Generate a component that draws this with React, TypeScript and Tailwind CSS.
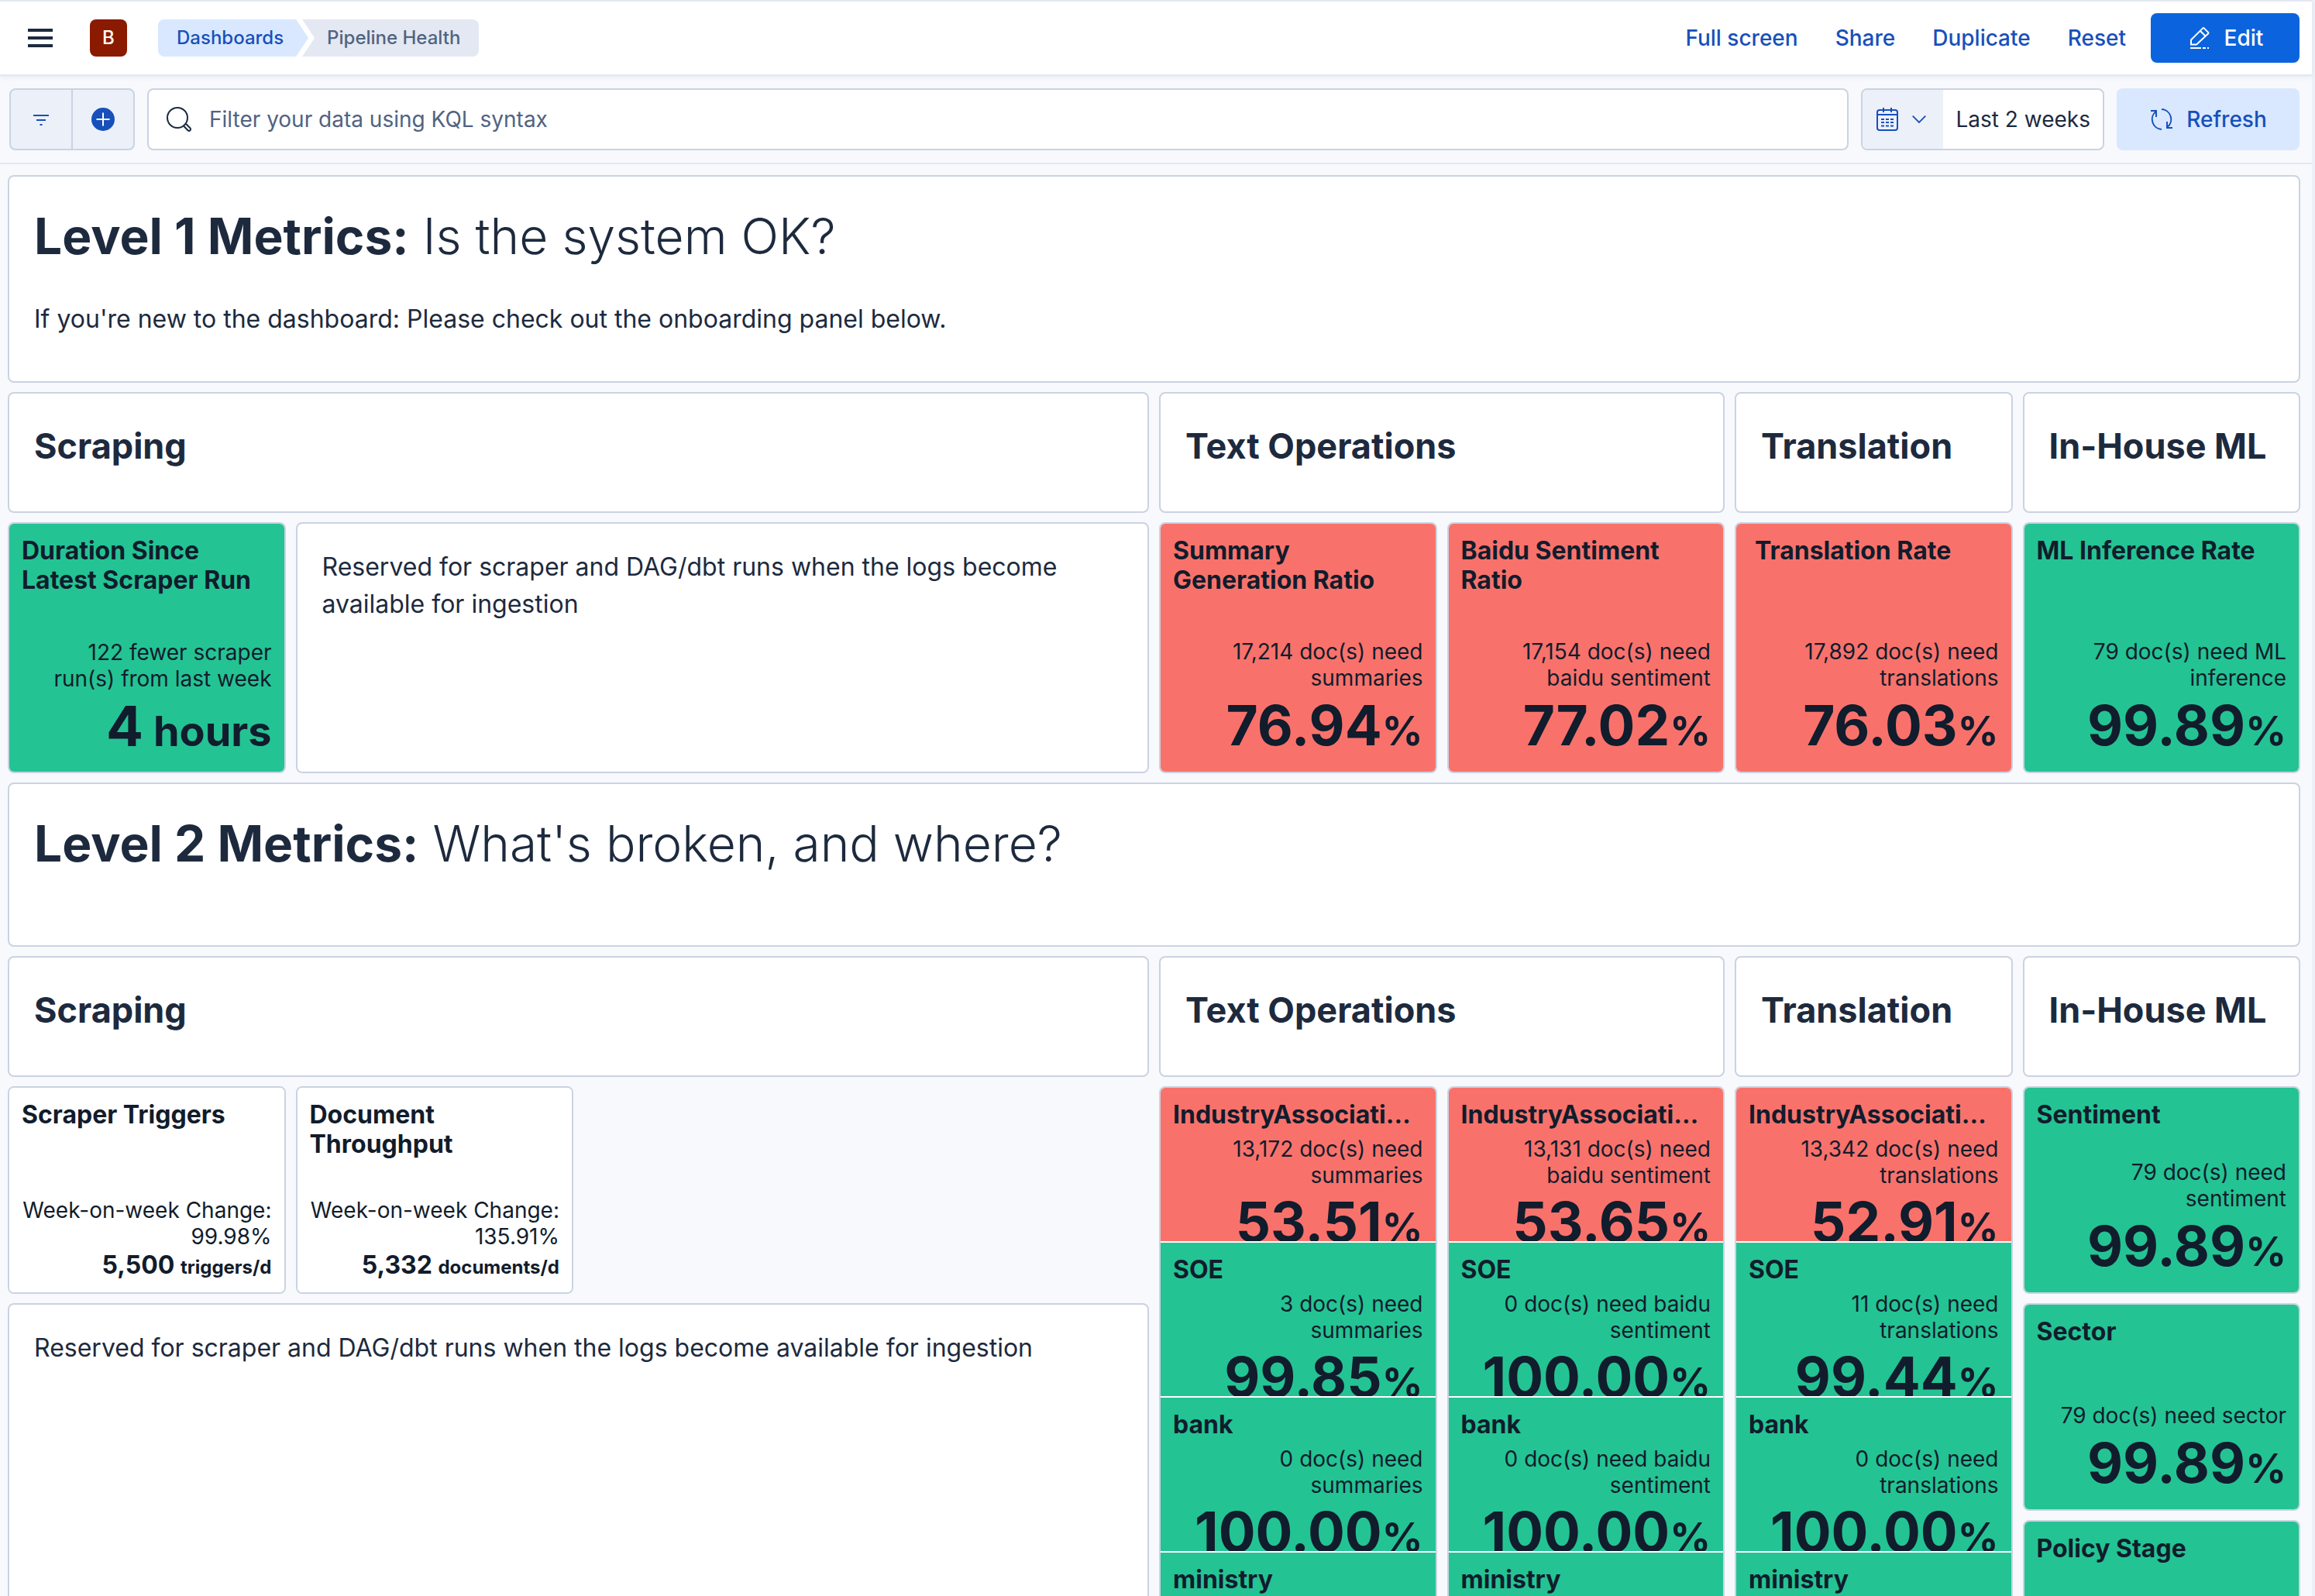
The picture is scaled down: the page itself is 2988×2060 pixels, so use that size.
import type { ReactNode } from "react";

type Tone = "red" | "green" | "white";

const toneClass: Record<Tone, string> = {
  red: "bg-[#f8726b]",
  green: "bg-[#24c393]",
  white: "bg-white",
};

interface Metric {
  title: string;
  note: string;
  value: string;
  unit: string;
  tone: Tone;
}

function Panel({ className = "", children }: { className?: string; children?: ReactNode }) {
  return (
    <section className={`overflow-hidden rounded-lg border-2 border-[#cad3e2] bg-white ${className}`}>
      {children}
    </section>
  );
}

function LevelHeading({ label, question }: { label: string; question: string }) {
  return (
    <h1 className="text-[64px] leading-[82px] font-light">
      <strong className="font-bold">{label}</strong> {question}
    </h1>
  );
}

function HeadingPanel({ className = "", text }: { className?: string; text: string }) {
  return (
    <Panel className={`row-span-6 px-8 pt-9 ${className}`}>
      <h2 className="text-[45px] leading-[64px] font-bold whitespace-nowrap">{text}</h2>
    </Panel>
  );
}

interface MetricBodyProps {
  metric: Metric;
  compact?: boolean;
  small?: boolean;
  inset?: boolean;
}

function MetricBody({ metric, compact = false, small = false, inset = false }: MetricBodyProps) {
  const box = compact ? "h-[198px]" : small ? "h-full pb-3" : "h-full pb-2";
  return (
    <div className={`flex flex-col overflow-hidden px-4 pt-4 text-[#111c2c] ${box} ${toneClass[metric.tone]}`}>
      <h3 className={`shrink-0 text-[32px] leading-[38px] font-bold ${compact ? "truncate pr-3" : ""} ${inset ? "pl-2" : ""}`}>
        {metric.title}
      </h3>
      <div className={`flex shrink-0 flex-col text-right ${compact ? "mt-2" : "mt-auto"}`}>
        <p className={`text-[28px] leading-[34px] ${compact ? "pl-2" : ""}`}>{metric.note}</p>
        {small ? (
          <p className="text-[32px] leading-[40px] font-bold whitespace-nowrap">
            {metric.value} <span className="text-[24px]">{metric.unit}</span>
          </p>
        ) : (
          <p className={`text-[71px] font-bold whitespace-nowrap ${compact ? "leading-[86px]" : "leading-[88px]"}`}>
            {metric.value}
            <span className={metric.unit === "%" ? "text-[52px]" : "text-[54px]"}>{metric.unit}</span>
          </p>
        )}
      </div>
    </div>
  );
}

function StackPanel({ metrics }: { metrics: Metric[] }) {
  return (
    <Panel className="row-span-40">
      <div className="flex flex-col gap-0.5">
        {metrics.map((m) => (
          <MetricBody key={m.title} metric={m} compact />
        ))}
      </div>
    </Panel>
  );
}

const RESERVED = "Reserved for scraper and DAG/dbt runs when the logs become available for ingestion";

const levelOne: Metric[] = [
  { title: "Summary Generation Ratio", note: "17,214 doc(s) need summaries", value: "76.94", unit: "%", tone: "red" },
  { title: "Baidu Sentiment Ratio", note: "17,154 doc(s) need baidu sentiment", value: "77.02", unit: "%", tone: "red" },
  { title: "Translation Rate", note: "17,892 doc(s) need translations", value: "76.03", unit: "%", tone: "red" },
  { title: "ML Inference Rate", note: "79 doc(s) need ML inference", value: "99.89", unit: "%", tone: "green" },
];

function stack(noun: string, rows: [string, string][]): Metric[] {
  const titles = ["IndustryAssociations", "SOE", "bank", "ministry"];
  return rows.map(([count, value], i) => ({
    title: titles[i],
    note: `${count} doc(s) need ${noun}`,
    value,
    unit: "%",
    tone: i === 0 ? "red" : "green",
  }));
}

const stacks: Metric[][] = [
  stack("summaries", [["13,172", "53.51"], ["3", "99.85"], ["0", "100.00"], ["0", "100.00"]]),
  stack("baidu sentiment", [["13,131", "53.65"], ["0", "100.00"], ["0", "100.00"], ["0", "100.00"]]),
  stack("translations", [["13,342", "52.91"], ["11", "99.44"], ["0", "100.00"], ["0", "100.00"]]),
];

const inference: Metric[] = ["Sentiment", "Sector", "Policy Stage"].map((title) => ({
  title,
  note: `79 doc(s) need ${title.toLowerCase()}`,
  value: "99.89",
  unit: "%",
  tone: "green",
}));

function FilterIcon() {
  return (
    <svg viewBox="0 0 32 32" className="size-8" fill="currentColor" aria-hidden="true">
      <path d="M6 10h20v2H6zM10 16h12v2H10zM14.500 22h3v2h-3z" />
    </svg>
  );
}

function PlusIcon() {
  return (
    <svg viewBox="0 0 32 32" className="size-8" aria-hidden="true">
      <circle cx="16" cy="16" r="15" fill="#1750ba" />
      <path d="M16 7.5v17M7.5 16h17" stroke="#fff" strokeWidth="2" />
    </svg>
  );
}

function SearchIcon() {
  return (
    <svg viewBox="0 0 34 34" className="size-[34px] shrink-0" fill="none" stroke="#1d2a3e" strokeWidth="2" aria-hidden="true">
      <circle cx="15" cy="15" r="13" />
      <path d="M23.500 26l5 5.200a1.900 1.900 0 0 0 2.900-2.900L26.200 23" />
    </svg>
  );
}

function CalendarIcon() {
  return (
    <svg viewBox="0 0 32 32" className="size-8" fill="none" stroke="currentColor" strokeWidth="2" aria-hidden="true">
      <rect x="3" y="4" width="26" height="26" rx="3" />
      <path d="M3 10h26M11 1v6M21 1v6" />
      <path d="M8 16h4M14 16h4M20 16h4M8 20h4M14 20h4M20 20h4M8 24.500h4M14 24.500h4M20 24.500h4" />
    </svg>
  );
}

function ChevronIcon() {
  return (
    <svg viewBox="0 0 18 10" className="h-2.5 w-[18px]" fill="none" stroke="currentColor" strokeWidth="1.8" aria-hidden="true">
      <path d="M.7.7 9 9l8.300-8.300" />
    </svg>
  );
}

function RefreshIcon() {
  return (
    <svg viewBox="0 0 32 32" className="size-8" fill="none" stroke="currentColor" strokeWidth="2" aria-hidden="true">
      <path d="M2 5h7v8M8.500 6A13 13 0 0 0 16 29" />
      <path d="M30 27h-7v-8M23.500 26A13 13 0 0 0 16 3" />
    </svg>
  );
}

function PencilIcon() {
  return (
    <svg viewBox="0 0 32 32" className="size-8" fill="none" stroke="currentColor" strokeWidth="2" aria-hidden="true">
      <path d="M5 24.500v-6L20 3.600q1-1 2 0l5 5q1 1 0 2L12 24.500zM17 7l6.500 6.500" />
      <path d="M4 29h14M20 29h4M26 29h2" />
    </svg>
  );
}

export default function App() {
  return (
    <div className="flex h-screen overflow-hidden bg-[#f7f9fd] font-['Inter','Liberation_Sans',sans-serif] text-[#1d2a3e]">
      <div className="flex min-w-0 flex-1 flex-col">
        <header className="relative flex h-[98px] shrink-0 items-center border-y-2 border-[#e3e8f2] bg-white pr-4 pl-9 shadow-[0_2px_6px_rgba(40,60,100,0.08)]">
          <button type="button" aria-label="Menu" className="flex w-8 flex-col gap-1.5">
            <span className="h-1 w-full bg-[#1d2a3e]" />
            <span className="h-1 w-full bg-[#1d2a3e]" />
            <span className="h-1 w-full bg-[#1d2a3e]" />
          </button>
          <button type="button" aria-label="Space B" className="ml-12 flex size-12 items-center justify-center rounded-lg bg-[#8a1a00] text-[24px] font-medium text-white">
            B
          </button>
          <nav aria-label="Breadcrumb" className="ml-10 flex h-12 text-[24px] leading-[48px] font-medium">
            <a href="#dashboards" className="rounded-l-lg bg-[#d9e8ff] pr-8 pl-6 text-[#1750ba] [clip-path:polygon(0_0,calc(100%-16px)_0,100%_50%,calc(100%-16px)_100%,0_100%)]">
              Dashboards
            </a>
            <span className="-ml-2 rounded-r-lg bg-[#e3e8f2] pr-6 pl-8 text-[#516381] [clip-path:polygon(0_0,100%_0,100%_100%,0_100%,16px_50%)]">
              Pipeline Health
            </span>
          </nav>
          <div className="ml-auto flex items-center text-[28px] font-medium text-[#1750ba]">
            <div className="mr-8 flex gap-12">
              <button type="button">Full screen</button>
              <button type="button">Share</button>
              <button type="button">Duplicate</button>
              <button type="button">Reset</button>
            </div>
            <button type="button" className="flex h-16 w-48 items-center justify-center gap-4 rounded-lg bg-[#0b64dd] text-white">
              <PencilIcon />
              Edit
            </button>
          </div>
        </header>

        <div className="flex h-[114px] shrink-0 items-center gap-4 border-b-2 border-[#e3e8f2] pr-4 pl-3">
          <div className="flex h-20 w-[162px] divide-x-2 divide-[#cad3e2] overflow-hidden rounded-lg border-2 border-[#cad3e2] bg-[#ecf0f9] text-[#1750ba]">
            <button type="button" aria-label="Filters" className="flex flex-1 items-center justify-center">
              <FilterIcon />
            </button>
            <button type="button" aria-label="Add filter" className="flex flex-1 items-center justify-center">
              <PlusIcon />
            </button>
          </div>
          <label className="flex h-20 flex-1 items-center gap-[22px] rounded-lg border-2 border-[#cad3e2] bg-white px-[22px]">
            <SearchIcon />
            <input
              type="text"
              aria-label="Filter your data using KQL syntax"
              placeholder="Filter your data using KQL syntax"
              className="h-full min-w-0 flex-1 text-[28px] outline-none placeholder:text-[#516381]"
            />
          </label>
          <div className="flex h-20 overflow-hidden rounded-lg border-2 border-[#cad3e2] bg-white">
            <button type="button" aria-label="Quick select" className="flex w-[104px] items-center gap-4 bg-[#ecf0f9] pl-4 text-[#1750ba]">
              <CalendarIcon />
              <ChevronIcon />
            </button>
            <button type="button" className="px-4 text-[28px]">Last 2 weeks</button>
          </div>
          <button type="button" className="flex h-20 w-[236px] items-center justify-center gap-4 rounded-lg bg-[#d9e8ff] text-[28px] font-medium text-[#1750ba]">
            <RefreshIcon />
            Refresh
          </button>
        </div>

        <main className="min-h-0 flex-1 overflow-hidden pt-[14px] pr-[15px] pl-[10px]">
          <div className="grid auto-rows-[16px] grid-cols-8 gap-x-[13px] gap-y-3">
            <Panel className="col-span-8 row-span-10 px-8 pt-9">
              <LevelHeading label="Level 1 Metrics:" question="Is the system OK?" />
              <p className="mt-[42px] text-[32px] leading-[48px]">
                If you're new to the dashboard: Please check out the onboarding panel below.
              </p>
            </Panel>

            <HeadingPanel className="col-span-4" text="Scraping" />
            <HeadingPanel className="col-span-2" text="Text Operations" />
            <HeadingPanel text="Translation" />
            <HeadingPanel text="In-House ML" />

            <Panel className="row-span-12">
              <MetricBody metric={{ title: "Duration Since Latest Scraper Run", note: "122 fewer scraper run(s) from last week", value: "4", unit: " hours", tone: "green" }} />
            </Panel>
            <Panel className="col-span-3 row-span-12 px-8 pt-8">
              <p className="text-[32px] leading-[48px]">{RESERVED}</p>
            </Panel>
            {levelOne.map((m) => (
              <Panel key={m.title} className="row-span-12">
                <MetricBody metric={m} inset={m.title === "Translation Rate"} />
              </Panel>
            ))}

            <Panel className="col-span-8 row-span-8 px-8 pt-9">
              <LevelHeading label="Level 2 Metrics:" question="What's broken, and where?" />
            </Panel>

            <HeadingPanel className="col-span-4" text="Scraping" />
            <HeadingPanel className="col-span-2" text="Text Operations" />
            <HeadingPanel text="Translation" />
            <HeadingPanel text="In-House ML" />

            <div className="col-span-4 row-span-40 grid auto-rows-[16px] grid-cols-4 gap-x-[13px] gap-y-3">
              <Panel className="row-span-10">
                <MetricBody small metric={{ title: "Scraper Triggers", note: "Week-on-week Change: 99.98%", value: "5,500", unit: "triggers/d", tone: "white" }} />
              </Panel>
              <Panel className="row-span-10">
                <MetricBody small metric={{ title: "Document Throughput", note: "Week-on-week Change: 135.91%", value: "5,332", unit: "documents/d", tone: "white" }} />
              </Panel>
              <Panel className="col-span-4 row-span-30 px-8 pt-8">
                <p className="text-[32px] leading-[48px]">{RESERVED}</p>
              </Panel>
            </div>
            {stacks.map((metrics) => (
              <StackPanel key={metrics[0].note} metrics={metrics} />
            ))}
            <div className="row-span-40 grid auto-rows-[16px] gap-y-3">
              {inference.map((m) => (
                <Panel key={m.title} className="row-span-10">
                  <MetricBody metric={m} />
                </Panel>
              ))}
            </div>
          </div>
        </main>
      </div>
      <div className="w-1 shrink-0 bg-[#ecf1f9]" />
    </div>
  );
}
